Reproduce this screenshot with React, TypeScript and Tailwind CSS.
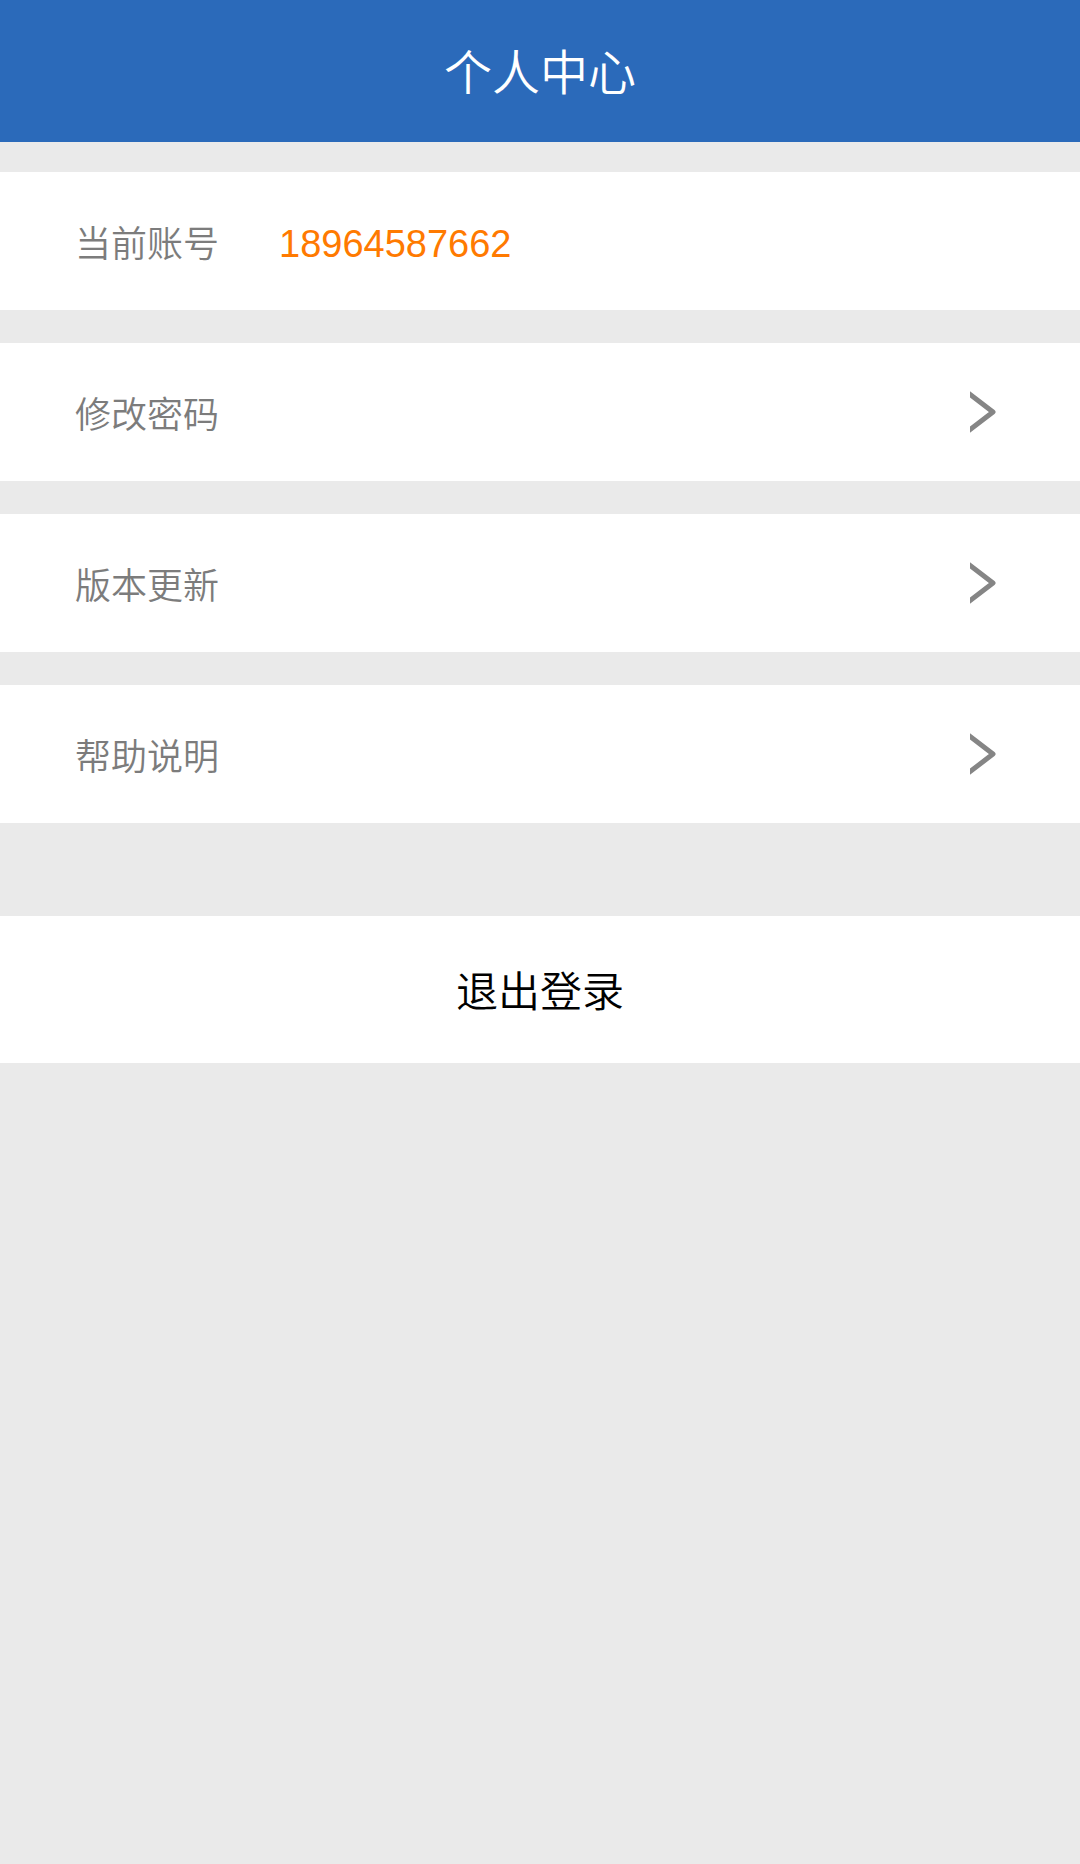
const items = ['修改密码', '版本更新', '帮助说明'];

function Chevron() {
  return (
    <svg aria-hidden="true" viewBox="0 0 26 42" className="h-[42px] w-[26px] overflow-hidden" fill="none" stroke="#858585" strokeWidth="5">
      <path d="M-3 1 L23 21 L-3 41" strokeLinejoin="round" />
    </svg>
  );
}

export default function App() {
  return (
    <div className="min-h-screen bg-[#eaeaea] font-['Noto_Sans_CJK_SC',sans-serif] text-4xl font-[350] text-[#7c7c7c]">
      <header className="flex h-[142px] items-center justify-center bg-[#2b6aba] pb-1">
        <h1 className="text-5xl font-[350] text-white">个人中心</h1>
      </header>
      <main className="pt-[30px]">
        <div className="flex flex-col gap-[33px]">
          <div className="flex h-[138px] items-center gap-[60px] bg-white px-[75px]">
            <span>当前账号</span>
            <span className="pt-1.5 font-['Liberation_Sans','Noto_Sans_CJK_SC',sans-serif] text-[38px] text-[#ff7a00]">18964587662</span>
          </div>
          {items.map((label) => (
            <button key={label} type="button" className="flex h-[138px] w-full items-center justify-between bg-white pr-[84px] pl-[75px]">
              <span>{label}</span>
              <Chevron />
            </button>
          ))}
        </div>
        <button type="button" className="mt-[93px] flex h-[147px] w-full items-center justify-center bg-white text-[42px] text-black">
          退出登录
        </button>
      </main>
    </div>
  );
}
